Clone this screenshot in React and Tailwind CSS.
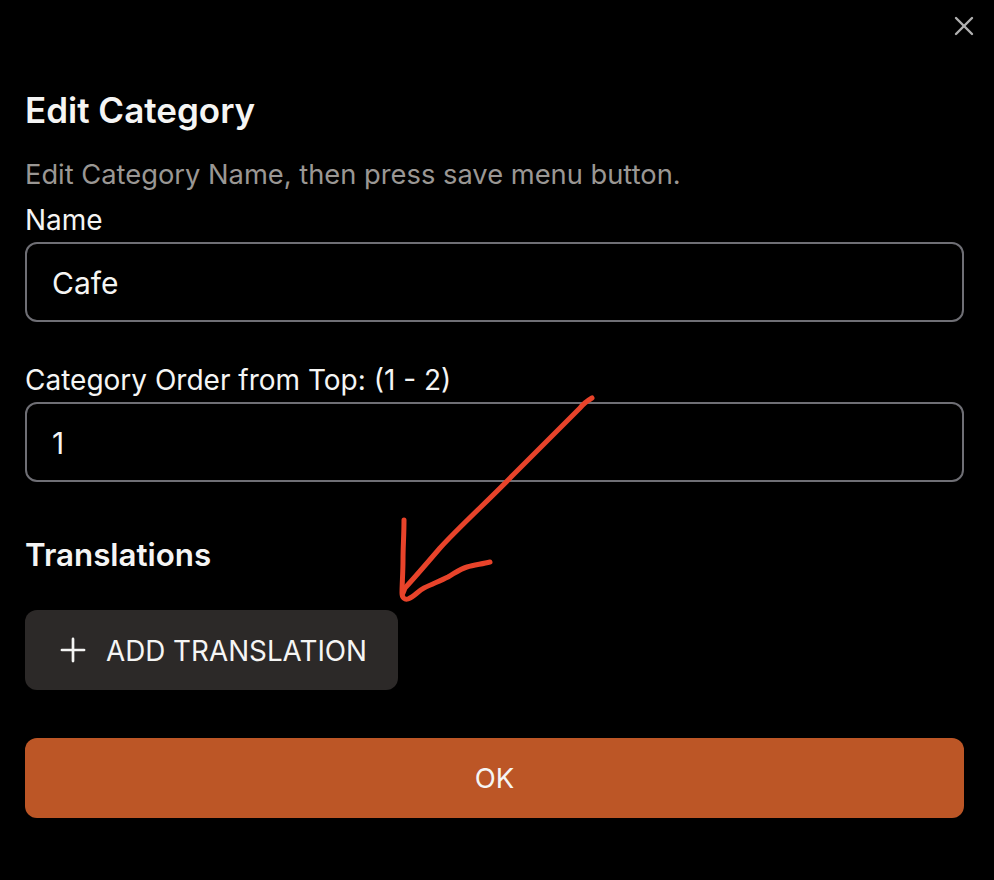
import { Plus, X } from 'lucide-react'

function Field({ label, value, className }) {
  return (
    <div className={className}>
      <label className="block h-[38px] text-[28px] leading-[36px] text-[#f5f5f4]">{label}</label>
      <div className="mt-[2px] h-[80px] rounded-[12px] border-2 border-[#6f6f75] pl-[25px] text-[30px] leading-[78px] text-[#f5f5f4]">{value}</div>
    </div>
  )
}

// hand drawn annotation on top of the dialog
function Arrow() {
  return (
    <svg className="absolute left-0 top-0 pointer-events-none" width="994" height="880" viewBox="0 0 994 880" fill="none" stroke="#e8432a" strokeWidth="5" strokeLinecap="round" strokeLinejoin="round">
      <path d="M592 398 C587 401 583 404 580 408 L513 475 C490 499 460 526 440 548 C428 562 416 576 405 588 L403 593" />
      <path d="M404 520 C404 535 403 547 403 560 C403 572 402 585 402 593 C402 598 405 600 408 599 C414 597 418 591 424 588 C432 584 440 581 448 577 C455 573 460 569 467 567 C474 565 482 564 490 562" />
    </svg>
  )
}

export default function App() {
  return (
    <div className="relative h-[880px] w-[994px] overflow-hidden bg-black pl-[25px] pr-[30px] pt-[90px] font-['Inter',sans-serif] text-white">
      <button className="absolute right-[14px] top-[10px] text-[#b0b0b0]">
        <X size={32} strokeWidth={1.8} />
      </button>

      <h2 className="h-[40px] text-[35px] font-semibold leading-[40px] text-[#f5f5f4]">Edit Category</h2>
      <p className="mt-[26px] h-[38px] text-[27.3px] leading-[38px] text-[#9a9794]">Edit Category Name, then press save menu button.</p>
      <Field className="mt-[8px]" label="Name" value="Cafe" />
      <Field className="mt-[40px]" label="Category Order from Top: (1 - 2)" value="1" />

      <h3 className="mt-[53px] h-[40px] text-[31.3px] font-semibold leading-[40px] text-[#f5f5f4]">Translations</h3>

      <button className="mt-[35px] flex h-[80px] w-[373px] items-center rounded-[12px] bg-[#2c2928] pl-[29px] text-[27.8px] font-normal text-[#f5f5f4]">
        <Plus size={38} strokeWidth={1.7} />
        <span className="ml-[14px] pt-[3px]">ADD TRANSLATION</span>
      </button>

      <button className="mt-[48px] h-[80px] w-full rounded-[12px] bg-[#bc5626] pt-[2px] text-[27.5px] font-normal text-[#f5f5f4]">OK</button>

      <Arrow />
    </div>
  )
}
